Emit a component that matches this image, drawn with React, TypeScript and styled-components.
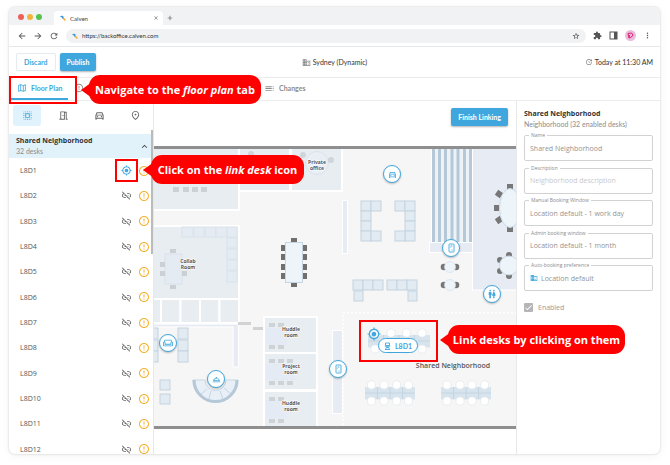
import React from "react";
import styled, { createGlobalStyle, css } from "styled-components";
import {
  MdArrowBack,
  MdArrowForward,
  MdRefresh,
  MdStarBorder,
  MdExtension,
  MdMoreVert,
  MdClose,
  MdAdd,
  MdOutlineMap,
  MdErrorOutline,
  MdToc,
  MdSelectAll,
  MdOutlineMeetingRoom,
  MdOutlineDirectionsCar,
  MdOutlinePlace,
  MdKeyboardArrowUp,
  MdMyLocation,
  MdLinkOff,
  MdUpdate,
  MdBusiness,
  MdDomain,
  MdOutlineWeekend,
  MdOutlineRoomService,
  MdWc,
  MdCheck,
} from "react-icons/md";

const BLUE = "#3fa7dd";
const RED = "#ff0000";
const COMPACT = "Lato, sans-serif";

const GlobalStyle = createGlobalStyle`
  * { box-sizing: border-box; }
  body { margin: 0; background: #fff; overflow: hidden; font-family: "Open Sans", "Noto Sans", sans-serif; color: #444; }
  button, input, select { font: inherit; color: inherit; padding: 0; margin: 0; border: 0; background: none; }
  svg { display: block; flex: none; }
`;

const Page = styled.div`
  position: relative;
  display: flex;
  height: 100vh;
  padding: 7px 10px 11px 9px;
`;

const Window = styled.div`
  flex: 1;
  min-width: 0;
  display: flex;
  flex-direction: column;
  background: #fff;
  border-radius: 6px;
  overflow: hidden;
  box-shadow: 0 0 2px rgba(0, 0, 0, 0.22), 0 2px 10px rgba(0, 0, 0, 0.05);
`;

const TabStrip = styled.div`
  display: flex;
  align-items: flex-end;
  height: 18px;
  padding-left: 9px;
  background: #f1f2f4;
`;

const Lights = styled.div`
  display: flex;
  align-items: center;
  gap: 3px;
  height: 16px;
  width: 36px;
`;

const Light = styled.span<{ $color: string }>`
  width: 6px;
  height: 6px;
  border-radius: 50%;
  background: ${(p) => p.$color};
`;

const BrowserTab = styled.div`
  display: flex;
  align-items: center;
  gap: 4px;
  width: 109px;
  height: 14px;
  padding: 0 4px 0 6px;
  border-radius: 4px 4px 0 0;
  background: #fff;
  font: 6px ${COMPACT};
  span { flex: 1; }
`;

const PlainButton = styled.button`
  display: flex;
  align-items: center;
  justify-content: center;
  color: #555;
`;

const NewTab = styled(PlainButton)`
  height: 14px;
  width: 13px;
`;

const Toolbar = styled.div`
  display: flex;
  align-items: center;
  height: 22px;
  padding: 0 8px;
  gap: 7px;
  border-bottom: 1px solid #e6e7e9;
`;

const Nav = styled.div`
  display: flex;
  gap: 6px;
`;

const Address = styled.label`
  flex: 1;
  display: flex;
  align-items: center;
  gap: 4px;
  height: 14px;
  padding: 0 6px;
  border-radius: 7px;
  background: #f1f2f4;
  input { flex: 1; font: 6px ${COMPACT}; color: #333; min-width: 0; }
`;

const Avatar = styled.span`
  display: flex;
  align-items: center;
  justify-content: center;
  width: 11px;
  height: 11px;
  border-radius: 50%;
  background: #e9bbdc;
`;

const Header = styled.header`
  display: grid;
  grid-template-columns: 1fr auto 1fr;
  align-items: center;
  height: 31px;
  padding: 0 7px;
  border-bottom: 1px solid #ececec;
  font: 7px ${COMPACT};
`;

const Actions = styled.div`
  display: flex;
  gap: 4px;
`;

const Inline = styled.div<{ $end?: boolean }>`
  display: flex;
  align-items: center;
  justify-content: ${(p) => (p.$end ? "flex-end" : "center")};
  gap: 2px;
  color: #333;
  svg { color: #888; }
`;

const Action = styled.button<{ $primary?: boolean }>`
  height: 18px;
  padding: 0 7px;
  border-radius: 2px;
  font: 700 7px ${COMPACT};
  ${(p) =>
    p.$primary
      ? css`
          background: ${BLUE};
          color: #fff;
          box-shadow: 0 1px 2px rgba(0, 0, 0, 0.3);
        `
      : css`
          border: 1px solid #e4eaee;
          color: ${BLUE};
        `}
`;

const Tabs = styled.nav`
  display: flex;
  height: 23px;
  padding-left: 2px;
  border-bottom: 1px solid #ececec;
`;

const Tab = styled.button<{ $active?: boolean; $width: number }>`
  display: flex;
  align-items: center;
  gap: 4px;
  width: ${(p) => p.$width}px;
  padding: 0 6px;
  font: 700 7px ${COMPACT};
  white-space: nowrap;
  color: ${(p) => (p.$active ? BLUE : "#8c8c8c")};
  border-bottom: 2px solid ${(p) => (p.$active ? BLUE : "transparent")};
`;

const Body = styled.main`
  flex: 1;
  min-height: 0;
  display: grid;
  grid-template-columns: 145px 1fr 144px;
  grid-template-rows: 100%;
`;

const Sidebar = styled.aside`
  position: relative;
  display: flex;
  flex-direction: column;
  overflow: hidden;
  border-right: 1px solid #e8e8e8;
`;

const Kinds = styled.div`
  display: grid;
  grid-template-columns: repeat(4, 28px);
  gap: 8px;
  padding: 4px 4px 8px;
`;

const Kind = styled(PlainButton)<{ $active?: boolean }>`
  height: 21px;
  border-radius: 3px;
  color: ${(p) => (p.$active ? BLUE : "#666")};
  background: ${(p) => (p.$active ? "#e0f2fc" : "none")};
`;

const Group = styled.button`
  display: flex;
  align-items: center;
  justify-content: space-between;
  height: 24px;
  flex: none;
  padding: 0 3px 0 7px;
  background: #e1f2fb;
  text-align: left;
`;

const Title = styled.strong`
  display: block;
  font-size: 7px;
  line-height: 10px;
  font-weight: 700;
  color: #333;
`;

const Sub = styled.span`
  display: block;
  font: 7px/10px ${COMPACT};
  color: #8c8c8c;
`;

const DeskList = styled.ul`
  flex: 1;
  display: flex;
  flex-direction: column;
  list-style: none;
  margin: 0 0 -8px;
  padding: 0;
`;

const DeskRow = styled.li`
  flex: 1;
  display: flex;
  align-items: center;
  gap: 6px;
  padding: 0 3px 0 11px;
  font-size: 7px;
  color: #555;
  span { flex: 1; }
`;

const IconButton = styled(PlainButton)<{ $color: string }>`
  width: 12px;
  height: 12px;
  color: ${(p) => p.$color};
`;

const Scrollbar = styled.div`
  position: absolute;
  right: 0;
  top: 29px;
  width: 2px;
  height: 124px;
  background: #bbb;
`;

const MapPane = styled.section`
  position: relative;
  overflow: hidden;
`;

const Finish = styled(Action)`
  position: absolute;
  right: 8px;
  top: 7px;
`;

const Pin = styled.button<{ $x: number; $y: number }>`
  position: absolute;
  left: ${(p) => p.$x}px;
  top: ${(p) => p.$y}px;
  display: flex;
  align-items: center;
  justify-content: center;
  width: 18px;
  height: 18px;
  border: 1px solid ${BLUE};
  border-radius: 50%;
  background: #fff;
  color: ${BLUE};
  box-shadow: 0 1px 2px rgba(0, 0, 0, 0.25);
`;

const DeskTarget = styled(IconButton)`
  position: absolute;
  left: 213px;
  top: 226px;
  width: 14px;
  height: 14px;
`;

const DeskChip = styled.button`
  position: absolute;
  left: 224px;
  top: 237px;
  display: flex;
  align-items: center;
  justify-content: center;
  gap: 4px;
  width: 40px;
  height: 15px;
  border: 1px solid ${BLUE};
  border-radius: 8px;
  background: #fff;
  color: ${BLUE};
  font: 700 7px ${COMPACT};
`;

const Panel = styled.aside`
  padding: 8px 7px 0;
  border-left: 1px solid #e8e8e8;
`;

const Fields = styled.div`
  display: flex;
  flex-direction: column;
  justify-content: space-between;
  height: 156px;
  margin-top: 6px;
`;

const Field = styled.div`
  position: relative;
  display: flex;
  align-items: center;
  gap: 3px;
  height: 26px;
  padding: 0 5px;
  border: 1px solid #d2d2d2;
  border-radius: 2px;
  font-size: 7px;
  color: #949494;
  label {
    position: absolute;
    left: 4px;
    top: -5px;
    padding: 0 2px;
    background: #fff;
    font-size: 5px;
    line-height: 8px;
    color: #8c8c8c;
  }
  input, select { flex: 1; min-width: 0; appearance: none; outline: 0; }
  input::placeholder { color: #c8c8c8; opacity: 1; }
`;

const Enabled = styled.label`
  position: relative;
  display: flex;
  align-items: center;
  gap: 5px;
  margin-top: 12px;
  font-size: 7px;
  color: #999;
  input { appearance: none; width: 9px; height: 9px; border-radius: 1px; background: #b5b5b5; }
  svg { position: absolute; left: 0; color: #fff; }
`;

const Highlight = styled.div<{ $x: number; $y: number; $w: number; $h: number }>`
  position: absolute;
  left: ${(p) => p.$x}px;
  top: ${(p) => p.$y}px;
  width: ${(p) => p.$w}px;
  height: ${(p) => p.$h}px;
  border: 2px solid ${RED};
  pointer-events: none;
`;

const Callout = styled.div<{ $x: number; $y: number; $w: number }>`
  position: absolute;
  left: ${(p) => p.$x}px;
  top: ${(p) => p.$y}px;
  width: ${(p) => p.$w}px;
  height: 29px;
  display: flex;
  align-items: center;
  justify-content: center;
  border-radius: 11px;
  background: ${RED};
  color: #fff;
  font-size: 11px;
  font-weight: 700;
  white-space: pre;
  &::before {
    content: "";
    position: absolute;
    left: -8px;
    top: 7px;
    border: solid transparent;
    border-width: 8px 11px 8px 0;
    border-right-color: ${RED};
  }
`;

const CalvenMark = () => (
  <svg width="6" height="6" viewBox="0 0 12 12" fill="none" strokeLinecap="round" strokeWidth="3.4">
    <path d="M2.500 3 L5 3.400 L6 6" stroke="#3798dc" />
    <path d="M7 7 L9.600 9.600" stroke="#f4ad32" />
  </svg>
);

const LockerIcon = () => (
  <svg width="9" height="10" viewBox="0 0 18 20" fill="none" stroke="currentColor" strokeWidth="1.8">
    <rect x="4" y="2" width="10" height="16" rx="1" />
    <path d="M7 6h4M7 9h1M10 13v2" />
  </svg>
);

const DeskIcon = () => (
  <svg width="7" height="8" viewBox="0 0 14 16" fill="none" stroke="currentColor" strokeWidth="1.8">
    <path d="M3 2h8v5H3zM1.500 8h11M3 10h8M3 15l2-4h4l2 4M2 15h10" />
  </svg>
);

const PanelIcon = () => (
  <svg width="9" height="9" viewBox="0 0 18 18">
    <rect x="2" y="2" width="14" height="14" fill="none" stroke="#555" strokeWidth="2" />
    <rect x="10" y="2" width="6" height="14" fill="#555" />
  </svg>
);

type Box = [number, number, number, number];

const Cells = ({ boxes, fill = "#e3ebf2", stroke = "#c3d3df" }: { boxes: Box[]; fill?: string; stroke?: string }) => (
  <g fill={fill} stroke={stroke} strokeWidth="1">
    {boxes.map(([x, y, w, h]) => (
      <rect key={`${x}-${y}`} x={x} y={y} width={w} height={h} />
    ))}
  </g>
);

const Blocks = ({ boxes, fill }: { boxes: Box[]; fill: string }) => (
  <g fill={fill}>
    {boxes.map(([x, y, w, h]) => (
      <rect key={`${x}-${y}`} x={x} y={y} width={w} height={h} />
    ))}
  </g>
);

const DeskBank = ({ x, y, w, top, bottom }: { x: number; y: number; w: number; top: number[]; bottom: number[] }) => (
  <g>
    <rect x={x} y={y} width={w} height="12.500" fill="#d7e4ed" />
    <path
      d={`M${x} ${y + 6}h${w}M${x + w / 4} ${y}v12M${x + w / 2} ${y}v12M${x + (w * 3) / 4} ${y}v12`}
      stroke="#bfd1dd"
      strokeWidth="0.8"
    />
    <g fill="#fff" stroke="#e2e6ea" strokeWidth="0.7">
      {top.map((cx) => (
        <circle key={cx} cx={cx} cy={y - 2} r="4.100" />
      ))}
      {bottom.map((cx) => (
        <circle key={cx} cx={cx} cy={y + 14} r="4.100" />
      ))}
    </g>
  </g>
);

const RoomLabel = ({ x, y, lines }: { x: number; y: number; lines: string[] }) => (
  <text
    textAnchor="middle"
    fontSize="5"
    fontWeight="700"
    fill="#555"
    stroke="#fff"
    strokeWidth="1"
    paintOrder="stroke"
  >
    {lines.map((line, i) => (
      <tspan key={line} x={x} y={y + i * 6}>
        {line}
      </tspan>
    ))}
  </text>
);

const huddleChairs = (y: number, wide: boolean): Box[] => {
  const xs = wide ? [269, 278, 287] : [269, 278];
  return xs.flatMap((x): Box[] => [
    [x, y, 6, 4],
    [x, y + 22, 6, 4],
  ]);
};

const FloorPlan = () => (
  <svg width="362" height="353" viewBox="154 101 362 353">
    <rect x="154" y="148" width="362" height="279" fill="#f6f6f6" />

    <g fill="#e8edf2" stroke="#fff" strokeWidth="2">
      <rect x="150" y="146" width="89" height="64" />
      <rect x="239" y="146" width="51" height="45" />
      <rect x="291" y="146" width="51" height="45" />
      <rect x="150" y="226" width="89" height="73" />
      {[142, 161, 180.5, 200, 219.5].map((x) => (
        <rect key={x} x={x} y="299" width="19.500" height="24" />
      ))}
      <rect x="264" y="317" width="53" height="36" />
      <rect x="264" y="353" width="53" height="37" />
      <rect x="264" y="391" width="53" height="38" />
    </g>
    <g fill="#e7ecf4" stroke="#fff" strokeWidth="1">
      <rect x="342.500" y="200.500" width="5" height="53" />
      <rect x="332.500" y="330.500" width="10" height="83" />
      <rect x="429.500" y="242.500" width="43" height="10" />
      <rect x="472.500" y="146" width="48" height="144" />
      <path d="M150 324h88.500v43h-5.500v-40H150z" />
    </g>

    <Blocks fill="#fff" boxes={[[431, 149, 41, 93]]} />
    <Blocks fill="#edf2f7" boxes={[[435, 149, 37, 93]]} />
    <Blocks
      fill="#b5c8d8"
      boxes={[432, 438, 444, 450.5, 456.5, 463, 469].map((x): Box => [x, 149, 3, 93])}
    />

    <Blocks fill="#ccd1d6" boxes={[173, 183, 192, 201].map((x): Box => [x, 187, 6, 5])} />
    <circle cx="317" cy="163" r="11.500" fill="#e9eef5" stroke="#dce3ea" />
    <g fill="#cfd5da">
      <circle cx="303" cy="155" r="3" />
      <circle cx="331" cy="160" r="3" />
      <circle cx="251" cy="154" r="3" />
    </g>

    <Cells
      fill="#e5ebf3"
      stroke="#d9e2ea"
      boxes={[
        [182, 227, 11, 10], [194, 227, 10, 10], [205, 227, 11, 10], [216, 227, 11, 10], [227, 227, 10, 10],
        [227, 238, 10, 10], [227, 249, 10, 10], [227, 260, 10, 10], [227, 271, 10, 11],
        [165, 254, 17, 30],
      ]}
    />
    <Blocks
      fill="#cbd0d5"
      boxes={[[170, 249, 6, 4], [170, 285, 6, 4], [160, 262, 5, 5], [160, 271, 5, 5], [182, 271, 5, 5]]}
    />

    <Blocks
      fill="#707070"
      boxes={[
        ...[245, 254, 264, 273].flatMap((y): Box[] => [[281, y, 4, 6], [303, y, 4, 6]]),
        [291, 238, 6, 4],
        [291, 283, 6, 4],
      ]}
    />
    <rect x="285.500" y="242.500" width="17" height="40" fill="#edf4fa" stroke="#c5d6e2" />

    <Cells
      boxes={[
        [361, 201, 10, 10], [371, 201, 10, 10], [361, 211, 10, 10], [361, 221, 10, 10], [361, 231, 10, 10], [371, 231, 10, 10],
        [395, 201, 10, 10], [405, 201, 10, 10], [405, 211, 10, 10], [405, 221, 10, 10], [405, 231, 10, 10], [395, 231, 10, 10],
        [353, 280, 10, 10], [363, 280, 10, 10], [373, 280, 10, 10], [354, 291, 9, 10],
        [387, 280, 10, 10], [397, 280, 10, 10], [407, 280, 10, 10], [408, 291, 9, 10],
        [150, 328, 8, 11], [150, 340, 8, 11], [150, 351, 8, 11],
        [178, 328, 10, 11], [178, 340, 10, 11], [178, 351, 10, 11],
        [160, 380, 10, 10], [160, 394, 10, 10],
      ]}
    />

    <g fill="#777">
      {[267, 285].map((y) => (
        <g key={y}>
          <circle cx="444" cy={y} r="3.300" />
          <circle cx="456" cy={y} r="3.300" />
          <circle cx="450" cy={y} r="5.500" fill="#edf4fa" stroke="#d2dfe8" strokeWidth="0.7" />
        </g>
      ))}
      <rect x="507" y="184" width="6" height="5" />
      <rect x="507" y="227" width="6" height="5" />
      <rect x="494" y="205" width="5" height="6" />
      <rect x="496" y="191" width="6" height="6" transform="rotate(35 499 194)" />
      <rect x="496" y="217" width="6" height="6" transform="rotate(-35 499 220)" />
      <circle cx="500" cy="260" r="3" />
      <circle cx="500" cy="271" r="3" />
      <circle cx="509" cy="255" r="3" />
      <circle cx="509" cy="276" r="3" />
    </g>
    <g fill="#edf4fa" stroke="#c9d8e3">
      <ellipse cx="510" cy="208" rx="10.500" ry="19.500" />
      <circle cx="509" cy="265.500" r="9.500" />
    </g>

    <path d="M193 380a22.500 22.500 0 0 0 45 0h-12a10.500 10.500 0 0 1 -21 0z" fill="#e8eff6" stroke="#c9d8e4" />
    <path d="M199 396l8-7M208 402l3-11M224 402l-4-11M232 395l-8-7" stroke="#c5d5e1" />
    <path d="M194 380a21.500 21.500 0 0 0 43 0" fill="none" stroke="#b5c8d8" strokeWidth="3" />

    <Blocks fill="#d0d2d4" boxes={[[238, 322, 13, 3], [253, 327, 10, 3]]} />
    <Blocks fill="#e4ebf5" boxes={[[266, 328, 21, 17], [266, 364, 29, 16], [266, 400, 21, 18]]} />
    <Blocks fill="#ced3d7" boxes={[...huddleChairs(323, false), ...huddleChairs(359, true), ...huddleChairs(397, false)]} />

    <path d="M343 425V313H516" fill="none" stroke="#fff" strokeWidth="1.500" strokeDasharray="2 2" />
    <DeskBank x={368} y={335} w={62} top={[376, 391, 406.5, 422]} bottom={[375, 391, 406, 422]} />
    <DeskBank x={365} y={387} w={50} top={[371.5, 384, 396.5, 408.5]} bottom={[371.5, 384, 396.5, 408.5]} />
    <DeskBank x={441} y={387} w={50} top={[447, 460, 472, 484.5]} bottom={[447, 460, 472, 484.5]} />

    <Blocks fill="#8f8f8f" boxes={[[154, 146, 362, 3], [154, 426, 362, 3]]} />

    <RoomLabel x={317} y={164} lines={["Private", "office"]} />
    <RoomLabel x={188} y={263} lines={["Collab", "Room"]} />
    <RoomLabel x={291} y={331} lines={["Huddle", "room"]} />
    <RoomLabel x={291} y={368} lines={["Project", "room"]} />
    <RoomLabel x={291} y={405} lines={["Huddle", "room"]} />
    <text x="453" y="368" textAnchor="middle" fontSize="7" fontWeight="600" fill="#555">
      Shared Neighborhood
    </text>
  </svg>
);

const desks = Array.from({ length: 12 }, (_, i) => `L8D${i + 1}`);

export default function App() {
  return (
    <Page>
      <GlobalStyle />
      <Window>
        <TabStrip>
          <Lights>
            <Light $color="#f15e5a" />
            <Light $color="#f2b43c" />
            <Light $color="#57c350" />
          </Lights>
          <BrowserTab>
            <CalvenMark />
            <span>Calven</span>
            <PlainButton aria-label="Close tab"><MdClose size={6} /></PlainButton>
          </BrowserTab>
          <NewTab aria-label="New tab"><MdAdd size={8} /></NewTab>
        </TabStrip>
        <Toolbar>
          <Nav>
            <PlainButton aria-label="Back"><MdArrowBack size={10} /></PlainButton>
            <PlainButton aria-label="Forward"><MdArrowForward size={10} /></PlainButton>
            <PlainButton aria-label="Reload"><MdRefresh size={10} /></PlainButton>
          </Nav>
          <Address>
            <CalvenMark />
            <input aria-label="Address" defaultValue="https://backoffice.calven.com" />
            <MdStarBorder size={8} />
          </Address>
          <PlainButton aria-label="Extensions"><MdExtension size={9} /></PlainButton>
          <PlainButton aria-label="Side panel"><PanelIcon /></PlainButton>
          <Avatar>
            <svg width="7" height="7" viewBox="0 0 14 14" fill="none" stroke="#dc2472" strokeWidth="2">
              <path d="M4 12L2 3l7-1 3 4-3 4-5 2 1-6" />
            </svg>
          </Avatar>
          <PlainButton aria-label="Menu"><MdMoreVert size={9} /></PlainButton>
        </Toolbar>
        <Header>
          <Actions>
            <Action>Discard</Action>
            <Action $primary>Publish</Action>
          </Actions>
          <Inline><MdDomain size={9} />Sydney (Dynamic)</Inline>
          <Inline $end><MdUpdate size={8} />Today at 11:30 AM</Inline>
        </Header>
        <Tabs>
          <Tab $active $width={57}><MdOutlineMap size={10} />Floor Plan</Tab>
          <Tab $width={190} aria-label="Problems"><MdErrorOutline size={10} /></Tab>
          <Tab $width={56}><MdToc size={11} />Changes</Tab>
        </Tabs>
        <Body>
          <Sidebar>
            <Kinds>
              <Kind $active aria-label="Neighborhoods"><MdSelectAll size={11} /></Kind>
              <Kind aria-label="Rooms"><MdOutlineMeetingRoom size={11} /></Kind>
              <Kind aria-label="Parking"><MdOutlineDirectionsCar size={11} /></Kind>
              <Kind aria-label="Places"><MdOutlinePlace size={11} /></Kind>
            </Kinds>
            <Group>
              <span>
                <Title>Shared Neighborhood</Title>
                <Sub>32 desks</Sub>
              </span>
              <MdKeyboardArrowUp size={11} />
            </Group>
            <DeskList>
              {desks.map((name, i) => (
                <DeskRow key={name}>
                  <span>{name}</span>
                  <IconButton $color={i === 0 ? BLUE : "#666"} aria-label={`Link ${name}`}>
                    {i === 0 ? <MdMyLocation size={11} /> : <MdLinkOff size={11} />}
                  </IconButton>
                  <IconButton $color="#f5b02e" aria-label={`${name} warning`}>
                    <MdErrorOutline size={12} />
                  </IconButton>
                </DeskRow>
              ))}
            </DeskList>
            <Scrollbar />
          </Sidebar>
          <MapPane>
            <FloorPlan />
            <Pin $x={229} $y={64} aria-label="Parking"><MdOutlineDirectionsCar size={9} /></Pin>
            <Pin $x={288} $y={138} aria-label="Lockers"><LockerIcon /></Pin>
            <Pin $x={329} $y={184} aria-label="Restrooms"><MdWc size={10} /></Pin>
            <Pin $x={5} $y={233} aria-label="Lounge"><MdOutlineWeekend size={10} /></Pin>
            <Pin $x={53} $y={269} aria-label="Reception"><MdOutlineRoomService size={9} /></Pin>
            <Pin $x={175} $y={259} aria-label="Lockers"><LockerIcon /></Pin>
            <DeskTarget $color={BLUE} aria-label="Link point"><MdMyLocation size={14} /></DeskTarget>
            <DeskChip><DeskIcon />L8D1</DeskChip>
            <Finish $primary>Finish Linking</Finish>
          </MapPane>
          <Panel>
            <Title>Shared Neighborhood</Title>
            <Sub>Neighborhood (32 enabled desks)</Sub>
            <Fields>
              <Field>
                <label htmlFor="name">Name</label>
                <input id="name" defaultValue="Shared Neighborhood" />
              </Field>
              <Field>
                <label htmlFor="description">Description</label>
                <input id="description" placeholder="Neighborhood description" />
              </Field>
              <Field>
                <label htmlFor="manual">Manual Booking Window</label>
                <select id="manual"><option>Location default - 1 work day</option></select>
              </Field>
              <Field>
                <label htmlFor="admin">Admin booking window</label>
                <select id="admin"><option>Location default - 1 month</option></select>
              </Field>
              <Field>
                <label htmlFor="auto">Auto-booking preference</label>
                <MdBusiness size={8} color={BLUE} />
                <select id="auto"><option>Location default</option></select>
              </Field>
            </Fields>
            <Enabled>
              <input type="checkbox" defaultChecked />
              <MdCheck size={9} />
              Enabled
            </Enabled>
          </Panel>
        </Body>
      </Window>
      <Highlight $x={9} $y={76} $w={68} $h={28} />
      <Highlight $x={115} $y={159} $w={23} $h={23} />
      <Highlight $x={359} $y={320} $w={79} $h={42} />
      <Callout $x={89} $y={75} $w={172}>Navigate to the <em>floor plan</em> tab</Callout>
      <Callout $x={151} $y={155} $w={153}>Click on the <em>link desk</em> icon</Callout>
      <Callout $x={448} $y={325} $w={177}>Link desks by clicking on them</Callout>
    </Page>
  );
}
